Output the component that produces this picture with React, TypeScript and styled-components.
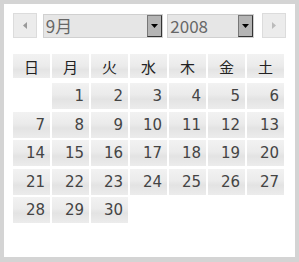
import React from 'react'
import styled, { createGlobalStyle } from 'styled-components'

const GlobalStyle = createGlobalStyle`
  html, body {
    margin: 0;
    padding: 0;
    background: #d4d4d4;
  }
`

const Frame = styled.div`
  width: 299px;
  height: 262px;
  box-sizing: border-box;
  padding: 4px 4px 5px 4px;
  background: #d4d4d4;
`

const Panel = styled.div`
  height: 100%;
  box-sizing: border-box;
  background: #fff;
  padding: 9px 9px 0 9px;
`

const Toolbar = styled.div`
  display: flex;
  align-items: center;
  height: 25px;
  margin-bottom: 16px;
`

const NavButton = styled.div<{ $dir: 'prev' | 'next' }>`
  width: 24px;
  height: 25px;
  box-sizing: border-box;
  border: 1px solid #dcdcdc;
  background: #ececec;
  display: flex;
  align-items: center;
  justify-content: center;
  margin: ${({ $dir }) => ($dir === 'prev' ? '0 6px 0 0' : '0 0 0 4px')};
`

const Select = styled.div<{ $width: number }>`
  width: ${({ $width }) => $width}px;
  height: 24px;
  box-sizing: border-box;
  border: 1px solid #d0d0d0;
  background: #e6e6e6;
  display: flex;
  align-items: center;
  margin-right: 4px;
  font-family: "Noto Sans CJK JP", "DejaVu Sans", sans-serif;
  font-size: 17px;
  color: #666;
  &:last-of-type {
    margin-right: 0;
  }
`

const SelectText = styled.span`
  flex: 1;
  padding-left: 2px;
  line-height: 22px;
`

const Arrow = styled.div`
  width: 15px;
  height: 22px;
  box-sizing: border-box;
  border: 1px solid #333;
  border-top-color: #777;
  border-left-color: #777;
  background: #b4b4b4;
  display: flex;
  align-items: center;
  justify-content: center;
`

const Grid = styled.div`
  display: grid;
  grid-template-columns: repeat(7, 37px);
  column-gap: 2px;
`

const HeadRow = styled.div`
  display: contents;
`

const HeadCell = styled.div`
  height: 24px;
  background: linear-gradient(#f2f2f2, #ebebeb 50%, #e4e4e4 65%, #ededed);
  font-family: "Noto Sans CJK JP", sans-serif;
  font-size: 15px;
  color: #222;
  display: flex;
  align-items: center;
  justify-content: center;
  margin-bottom: 5px;
`

const DayCell = styled.div<{ $empty?: boolean }>`
  height: 26px;
  margin-bottom: 2.5px;
  box-sizing: border-box;
  padding-right: 5px;
  background: ${({ $empty }) =>
    $empty ? 'transparent' : 'linear-gradient(#f2f2f2, #ebebeb 45%, #e3e3e3 62%, #ececec)'};
  font-family: "DejaVu Sans", Verdana, sans-serif;
  font-size: 15px;
  color: #444;
  display: flex;
  align-items: center;
  justify-content: flex-end;
`

const Triangle = ({ dir, color }: { dir: 'left' | 'right' | 'down'; color: string }) => {
  if (dir === 'down')
    return (
      <svg width="7" height="4" viewBox="0 0 7 4">
        <polygon points="0,0 7,0 3.5,4" fill={color} />
      </svg>
    )
  return (
    <svg width="4" height="7" viewBox="0 0 4 7">
      <polygon points={dir === 'left' ? '4,0 4,7 0,3.5' : '0,0 0,7 4,3.5'} fill={color} />
    </svg>
  )
}

const weekDays = ['日', '月', '火', '水', '木', '金', '土']

const App: React.FC = () => {
  const days: (number | null)[] = [null]
  for (let d = 1; d <= 30; d++) days.push(d)

  return (
    <>
      <GlobalStyle />
      <Frame>
        <Panel>
          <Toolbar>
            <NavButton $dir="prev">
              <Triangle dir="left" color="#999" />
            </NavButton>
            <Select $width={122}>
              <SelectText>9月</SelectText>
              <Arrow>
                <Triangle dir="down" color="#000" />
              </Arrow>
            </Select>
            <Select $width={88}>
              <SelectText>2008</SelectText>
              <Arrow>
                <Triangle dir="down" color="#000" />
              </Arrow>
            </Select>
            <NavButton $dir="next">
              <Triangle dir="right" color="#bbb" />
            </NavButton>
          </Toolbar>
          <Grid>
            <HeadRow>
              {weekDays.map((w) => (
                <HeadCell key={w}>{w}</HeadCell>
              ))}
            </HeadRow>
            {days.map((d, i) => (
              <DayCell key={i} $empty={d === null}>
                {d}
              </DayCell>
            ))}
          </Grid>
        </Panel>
      </Frame>
    </>
  )
}

export default App
